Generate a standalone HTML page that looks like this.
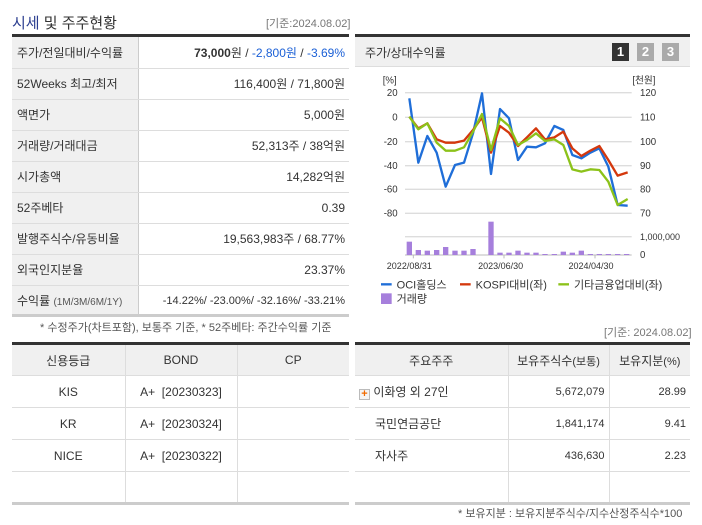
<!DOCTYPE html>
<html><head><meta charset="utf-8"><style>
*{margin:0;padding:0;box-sizing:border-box}
body{width:702px;height:525px;background:#fff;font-family:"Liberation Sans","Noto Sans CJK KR",sans-serif;font-size:12px;color:#333;position:relative;overflow:hidden}
.a{position:absolute}
table{border-collapse:collapse;position:absolute;table-layout:fixed}
td{height:31px;border-bottom:1px solid #ddd;font-size:12px}
.lt td.l{background:#f0f0f0;padding-left:5px;border-right:1px solid #ccc;color:#333}
.lt td.r{text-align:right;padding-right:4px;color:#333}
.blue{color:#1a5fd6}
.bt td,.bt th{height:32px;border-bottom:1px solid #ddd;border-right:1px solid #ddd;font-weight:normal;font-size:12px;text-align:center}
.bt th{background:#f0f0f0;height:32px}
.bt td:last-child,.bt th:last-child{border-right:none}
</style></head><body>
<div class="a" style="left:12px;top:12px;font-size:15px;color:#333"><span style="color:#2a3d8f">시세</span> 및 주주현황</div>
<div class="a" style="left:266px;top:15px;font-size:11px;color:#777">[기준:2024.08.02]</div>
<div class="a" style="left:12px;top:34px;width:337px;height:3px;background:#333"></div>
<table class="lt" style="left:12px;top:37px;width:337px">
<colgroup><col style="width:126px"><col></colgroup>
<tr><td class="l">주가/전일대비/수익률</td><td class="r"><b>73,000</b>원 / <span class="blue">-2,800원</span> / <span class="blue">-3.69%</span></td></tr>
<tr><td class="l">52Weeks 최고/최저</td><td class="r">116,400원 / 71,800원</td></tr>
<tr><td class="l">액면가</td><td class="r">5,000원</td></tr>
<tr><td class="l">거래량/거래대금</td><td class="r">52,313주 / 38억원</td></tr>
<tr><td class="l">시가총액</td><td class="r">14,282억원</td></tr>
<tr><td class="l">52주베타</td><td class="r">0.39</td></tr>
<tr><td class="l">발행주식수/유동비율</td><td class="r">19,563,983주 / 68.77%</td></tr>
<tr><td class="l">외국인지분율</td><td class="r">23.37%</td></tr>
<tr><td class="l" style="border-bottom:none">수익률 <span style="font-size:10px;color:#555">(1M/3M/6M/1Y)</span></td><td class="r blue" style="font-size:11px;border-bottom:none">-14.22%/ -23.00%/ -32.16%/ -33.21%</td></tr>
</table>
<div class="a" style="left:12px;top:314px;width:337px;height:3px;background:#ccc"></div>
<div class="a" style="left:40px;top:319px;font-size:11px;color:#555">* 수정주가(차트포함), 보통주 기준, * 52주베타: 주간수익률 기준</div>

<div class="a" style="left:355px;top:34px;width:335px;height:3px;background:#333"></div>
<div class="a" style="left:355px;top:37px;width:335px;height:30px;background:#f0f0f0;border-bottom:1px solid #ddd"></div>
<div class="a" style="left:365px;top:44px;font-size:12px">주가/상대수익률</div>
<div class="a" style="left:612px;top:43px;width:17px;height:18px;background:#333;color:#fff;font-weight:bold;text-align:center;line-height:18px;font-size:13px">1</div>
<div class="a" style="left:637px;top:43px;width:17px;height:18px;background:#aaa;color:#fff;font-weight:bold;text-align:center;line-height:18px;font-size:13px">2</div>
<div class="a" style="left:662px;top:43px;width:17px;height:18px;background:#aaa;color:#fff;font-weight:bold;text-align:center;line-height:18px;font-size:13px">3</div>

<svg class="a" style="left:355px;top:30px" width="347" height="280" viewBox="0 0 1041 840" font-family="Liberation Sans, Noto Sans CJK KR, sans-serif">
<g stroke="#ddd" stroke-width="4">
<line x1="150" y1="188" x2="830" y2="188"/><line x1="150" y1="262" x2="830" y2="262"/><line x1="150" y1="335" x2="830" y2="335"/><line x1="150" y1="407" x2="830" y2="407"/><line x1="150" y1="478" x2="830" y2="478"/><line x1="150" y1="550" x2="830" y2="550"/><line x1="150" y1="620" x2="830" y2="620"/>
</g>
<line x1="150" y1="675" x2="830" y2="675" stroke="#bbb" stroke-width="3"/>
<g stroke="#bbb" stroke-width="3"><line x1="175" y1="675" x2="175" y2="685"/><line x1="447" y1="675" x2="447" y2="685"/><line x1="720" y1="675" x2="720" y2="685"/></g>
<g font-size="29" fill="#333" text-anchor="end">
<text x="125" y="160">[%]</text>
<text x="128" y="198">20</text><text x="128" y="272">0</text><text x="128" y="345">-20</text><text x="128" y="417">-40</text><text x="128" y="488">-60</text><text x="128" y="560">-80</text>
</g>
<g font-size="29" fill="#333">
<text x="832" y="160">[천원]</text>
<text x="855" y="198">120</text><text x="855" y="272">110</text><text x="855" y="345">100</text><text x="855" y="417">90</text><text x="855" y="488">80</text><text x="855" y="560">70</text>
<text x="855" y="630" font-size="27">1,000,000</text><text x="855" y="684">0</text>
</g>
<g font-size="27" fill="#333" text-anchor="middle"><text x="163" y="717">2022/08/31</text><text x="437" y="717">2023/06/30</text><text x="708" y="717">2024/04/30</text></g>
<g fill="#a67fdc">
<rect x="155" y="635" width="16" height="40"/><rect x="182" y="660" width="16" height="15"/><rect x="209" y="662" width="16" height="13"/><rect x="237" y="660" width="16" height="15"/><rect x="264" y="651" width="16" height="24"/><rect x="292" y="662" width="16" height="13"/><rect x="319" y="662" width="16" height="13"/><rect x="346" y="657" width="16" height="18"/><rect x="400" y="575" width="16" height="100"/><rect x="427" y="668" width="16" height="7"/><rect x="454" y="668" width="16" height="7"/><rect x="481" y="662" width="16" height="13"/><rect x="508" y="668" width="16" height="7"/><rect x="535" y="668" width="16" height="7"/><rect x="562" y="672" width="16" height="3"/><rect x="590" y="672" width="16" height="3"/><rect x="617" y="665" width="16" height="10"/><rect x="644" y="668" width="16" height="7"/><rect x="671" y="662" width="16" height="13"/><rect x="698" y="672" width="16" height="3"/><rect x="725" y="672" width="16" height="3"/><rect x="752" y="672" width="16" height="3"/><rect x="780" y="672" width="16" height="3"/><rect x="807" y="672" width="16" height="3"/>
</g>
<g fill="none" stroke-width="7" stroke-linejoin="round">
<polyline stroke="#1f6ed8" points="163,205 190,398 217,318 245,368 272,470 300,405 327,398 354,310 381,190 408,432 435,237 462,265 489,390 516,350 543,352 570,340 598,288 625,300 652,375 679,385 706,368 733,355 760,410 788,525 818,527"/>
<polyline stroke="#d4380d" points="163,260 190,295 217,280 245,328 272,338 300,338 327,332 354,300 381,262 408,368 435,288 462,308 489,348 516,322 543,295 570,328 598,322 625,305 652,355 679,378 706,362 733,348 760,390 788,437 818,427"/>
<polyline stroke="#8cc21a" points="163,260 190,298 217,280 245,338 272,362 300,362 327,352 354,305 381,252 408,360 435,265 462,288 489,345 516,330 543,310 570,333 598,328 625,345 652,418 679,425 706,418 733,420 760,455 788,525 818,507"/>
</g>
<g font-size="33" fill="#333">
<line x1="78" y1="763" x2="110" y2="763" stroke="#1f6ed8" stroke-width="7"/><text x="125" y="775">OCI홀딩스</text>
<line x1="315" y1="763" x2="347" y2="763" stroke="#d4380d" stroke-width="7"/><text x="362" y="775">KOSPI대비(좌)</text>
<line x1="610" y1="763" x2="642" y2="763" stroke="#8cc21a" stroke-width="7"/><text x="657" y="775">기타금융업대비(좌)</text>
<rect x="78" y="790" width="32" height="32" fill="#a67fdc"/><text x="125" y="818">거래량</text>
</g>
</svg>

<div class="a" style="left:604px;top:324px;font-size:11px;color:#777">[기준: 2024.08.02]</div>

<table class="bt" style="left:12px;top:342px;width:337px;border-top:3px solid #333;border-bottom:3px solid #ccc">
<colgroup><col style="width:113px"><col style="width:112px"><col></colgroup>
<tr><th>신용등급</th><th>BOND</th><th>CP</th></tr>
<tr><td>KIS</td><td>A+ &nbsp;[20230323]</td><td></td></tr>
<tr><td>KR</td><td>A+ &nbsp;[20230324]</td><td></td></tr>
<tr><td>NICE</td><td>A+ &nbsp;[20230322]</td><td></td></tr>
<tr><td style="border-bottom:none"></td><td style="border-bottom:none"></td><td style="border-bottom:none"></td></tr>
</table>
<table class="bt" style="left:355px;top:342px;width:335px;border-top:3px solid #333;border-bottom:3px solid #ccc">
<colgroup><col style="width:153px"><col style="width:101px"><col></colgroup>
<tr><th>주요주주</th><th>보유주식수<span style="font-size:11px">(보통)</span></th><th>보유지분<span style="font-size:11px">(%)</span></th></tr>
<tr><td style="text-align:left;padding-left:4px"><span style="display:inline-block;width:11px;height:11px;border:1px solid #bbb;background:#f5f5f5;color:#f06a00;font-size:11px;line-height:9px;text-align:center;font-weight:bold;vertical-align:-1px">+</span> 이화영 외 27인</td><td style="text-align:right;padding-right:4px;font-size:11px">5,672,079</td><td style="text-align:right;padding-right:4px;font-size:11px">28.99</td></tr>
<tr><td style="text-align:left;padding-left:20px">국민연금공단</td><td style="text-align:right;padding-right:4px;font-size:11px">1,841,174</td><td style="text-align:right;padding-right:4px;font-size:11px">9.41</td></tr>
<tr><td style="text-align:left;padding-left:20px">자사주</td><td style="text-align:right;padding-right:4px;font-size:11px">436,630</td><td style="text-align:right;padding-right:4px;font-size:11px">2.23</td></tr>
<tr><td style="border-bottom:none"></td><td style="border-bottom:none"></td><td style="border-bottom:none"></td></tr>
</table>
<div class="a" style="left:458px;top:505px;font-size:11px;color:#555">* 보유지분 : 보유지분주식수/지수산정주식수*100</div>
</body></html>
